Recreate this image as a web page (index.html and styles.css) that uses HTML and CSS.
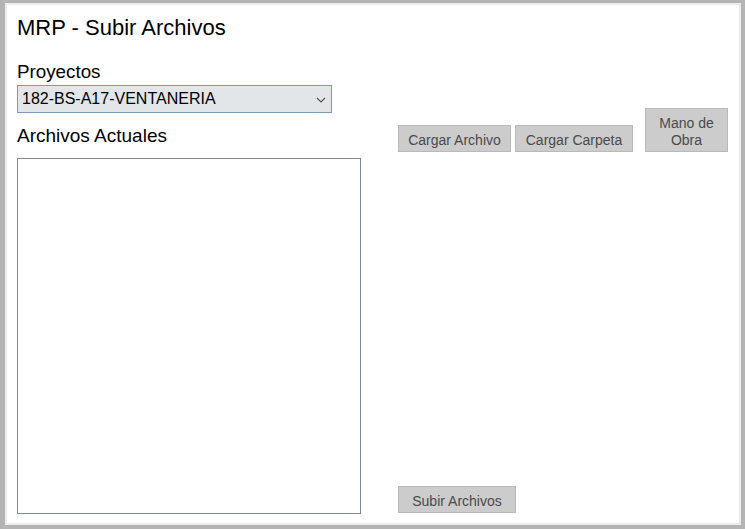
FILE: index.html
```html
<!DOCTYPE html>
<html lang="es">
<head>
<meta charset="utf-8">
<title>MRP - Subir Archivos</title>
<link rel="stylesheet" href="styles.css">
</head>
<body>
<div class="window">
  <div class="left">
    <h1 class="title">MRP - Subir Archivos</h1>
    <label class="label-proj">Proyectos</label>
    <div class="select">
      <span class="select-text">182-BS-A17-VENTANERIA</span>
      <svg class="chev" width="10" height="6" viewBox="0 0 10 6"><path d="M1 1 L5 5 L9 1" fill="none" stroke="#555" stroke-width="1.1"/></svg>
    </div>
    <div class="label-files">Archivos Actuales</div>
    <div class="listbox"></div>
  </div>
  <div class="right">
    <div class="btn-row">
      <button class="btn btn-archivo">Cargar Archivo</button>
      <button class="btn btn-carpeta">Cargar Carpeta</button>
      <button class="btn btn-mano">Mano de<br>Obra</button>
    </div>
    <button class="btn btn-subir">Subir Archivos</button>
  </div>
</div>
</body>
</html>
```

FILE: styles.css
```css
* { box-sizing: border-box; }
html, body { margin: 0; }
body {
  background: #b4b4b4;
  height: 529px;
  width: 745px;
  padding: 3px 4px 4px 5px;
  display: flex;
  font-family: "Liberation Sans", Arial, sans-serif;
  overflow: hidden;
}
.window {
  flex: 1;
  background: #ffffff;
  border: 2px solid #ececec;
  display: flex;
  padding: 0 0 9px 10px;
}
.left {
  width: 344px;
  display: flex;
  flex-direction: column;
  padding-top: 11px;
}
.title {
  margin: 0;
  font-weight: normal;
  font-size: 22px;
  line-height: 24px;
  color: #000;
}
.label-proj {
  margin-top: 22px;
  font-size: 18.8px;
  line-height: 20px;
  color: #000;
}
.select {
  margin-top: 3px;
  width: 315px;
  height: 28px;
  background: #e3e6e9;
  border: 1px solid #7d9ab8;
  display: flex;
  align-items: center;
  justify-content: space-between;
  padding: 0 5px 0 4px;
}
.select-text {
  font-size: 16px;
  color: #000;
}
.chev { display: block; margin-top: 1px; }
.label-files {
  margin-top: 12px;
  font-size: 19px;
  line-height: 22px;
  color: #000;
}
.listbox {
  margin-top: 11px;
  flex: 1;
  border: 1px solid #828790;
  background: #fff;
}
.right {
  margin-left: 37px;
  display: flex;
  flex-direction: column;
  justify-content: space-between;
  padding-top: 103px;
  padding-bottom: 1px;
}
.btn-row {
  display: flex;
  align-items: flex-end;
}
.btn {
  font-family: "Liberation Sans", Arial, sans-serif;
  font-size: 14px;
  line-height: 17px;
  color: #4a4a4a;
  background: #cccccc;
  border: 1px solid #b9b9b9;
  padding: 3px 0 0 0;
  margin: 0;
  height: 27px;
  text-align: center;
}
.btn-archivo { width: 113px; }
.btn-carpeta { width: 118px; margin-left: 4px; }
.btn-mano { width: 83px; height: 44px; margin-left: 12px; }
.btn-subir { width: 118px; }
```
